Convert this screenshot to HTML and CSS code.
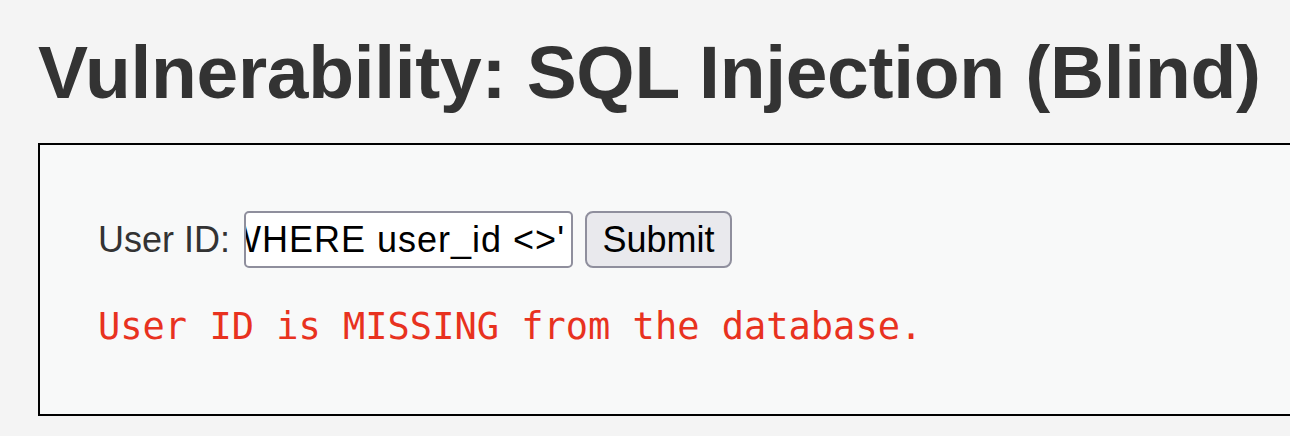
FILE: index.html
```html
<!DOCTYPE html>
<html lang="en">
<head>
<meta charset="utf-8">
<title>Vulnerability: SQL Injection (Blind)</title>
<link rel="stylesheet" href="styles.css">
</head>
<body>
<div class="page">
  <h1 class="title">Vulnerability: SQL Injection (Blind)</h1>
  <div class="code-area">
    <form class="form">
      <label class="label" for="uid">User ID:</label>
      <div class="field" id="uid"><span class="field-text">WHERE user_id &lt;&gt;'</span></div>
      <button class="submit" type="button">Submit</button>
    </form>
    <pre class="msg">User ID is MISSING from the database.</pre>
  </div>
</div>
</body>
</html>
```

FILE: styles.css
```css
html, body {
  margin: 0;
  padding: 0;
  background: #f4f4f4;
  overflow: hidden;
}
body {
  width: 1290px;
  height: 436px;
  font-family: "Liberation Sans", Arial, sans-serif;
  color: #333;
}
.page {
  padding-left: 38px;
}
.title {
  margin: 0;
  padding-top: 29px;
  font-size: 75px;
  letter-spacing: -0.3px;
  line-height: 86px;
  font-weight: bold;
  color: #333;
  white-space: nowrap;
  box-sizing: border-box;
  height: 143px;
}
.code-area {
  width: 1400px;
  border: 2px solid #000;
  background: #f8f9f9;
  padding: 66px 0 0 58px;
  box-sizing: border-box;
  height: 273px;
}
.form {
  display: flex;
  align-items: center;
  height: 57px;
}
.label {
  font-size: 36px;
  color: #333;
  margin-right: 14px;
}
.field {
  width: 329px;
  height: 57px;
  box-sizing: border-box;
  border: 2px solid #8f8f9d;
  border-radius: 5px;
  background: #fff;
  display: flex;
  justify-content: flex-end;
  align-items: center;
  overflow: hidden;
  padding-right: 6px;
  white-space: nowrap;
}
.field-text {
  font-size: 36px;
  letter-spacing: 1px;
  color: #000;
  flex: none;
}
.submit {
  margin-left: 12px;
  width: 147px;
  height: 57px;
  box-sizing: border-box;
  border: 2px solid #8f8f9d;
  border-radius: 8px;
  background: #e9e9ed;
  font-family: "Liberation Sans", Arial, sans-serif;
  font-size: 36px;
  color: #000;
  padding: 0;
}
.msg {
  margin: 37px 0 0 0;
  font-family: "DejaVu Sans Mono", monospace;
  font-size: 37px;
  line-height: 44px;
  color: #e8321f;
}
```
